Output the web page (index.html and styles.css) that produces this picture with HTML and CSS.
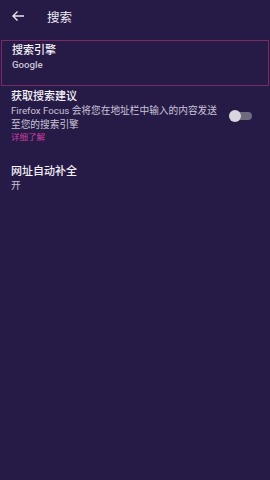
FILE: index.html
```html
<!DOCTYPE html>
<html lang="zh">
<head>
  <meta charset="UTF-8">
  <meta name="viewport" content="width=device-width, initial-scale=1.0">
  <link rel="stylesheet" href="styles.css">
</head>
<body>
  <div class="toolbar">
    <svg class="back" width="14" height="12" viewBox="0 0 14 12">
      <path d="M13 6H2M6.5 1.5L2 6l4.5 4.5" fill="none" stroke="#e8e6ef" stroke-width="1.4"/>
    </svg>
    <span class="title">搜索</span>
  </div>

  <div class="pref focused">
    <div class="pref-title">搜索引擎</div>
    <div class="pref-summary">Google</div>
  </div>

  <div class="pref with-switch">
    <div class="pref-text">
      <div class="pref-title">获取搜索建议</div>
      <div class="pref-summary">Firefox Focus 会将您在地址栏中输入的内容发送至您的搜索引擎</div>
      <div class="learn-more">详细了解</div>
    </div>
    <div class="switch"><span class="thumb"></span></div>
  </div>

  <div class="pref">
    <div class="pref-title">网址自动补全</div>
    <div class="pref-summary">开</div>
  </div>
</body>
</html>
```

FILE: styles.css
```css
body {
  margin: 0;
  height: 480px;
  background-color: #261a47;
  font-family: 'Roboto', 'Noto Sans CJK SC', sans-serif;
  color: #f2f0f7;
}

.toolbar {
  height: 40px;
  display: flex;
  align-items: center;
  padding: 0 0 8px 11px;
  box-sizing: border-box;
}

.back {
  margin-right: 22px;
}

.title {
  font-size: 12.5px;
  color: #eceaf2;
}

.pref {
  padding: 3px 11px 0;
  box-sizing: border-box;
}

.focused {
  height: 46px;
  margin: 0 1px;
  padding: 3px 10px 0;
  border: 1px solid #7c2a66;
}

.pref-title {
  font-size: 11px;
  line-height: 14px;
  font-weight: 500;
  color: #f4f2f8;
}

.focused .pref-summary {
  line-height: 13px;
  font-weight: 500;
}

.pref-summary {
  font-size: 9.7px;
  line-height: 14px;
  color: #c9c4d6;
}

.with-switch {
  display: flex;
  align-items: flex-start;
  padding-top: 4px;
  padding-right: 18px;
  height: 76px;
}

.pref-text {
  width: 214px;
}

.learn-more {
  font-size: 8.5px;
  line-height: 10px;
  color: #d33ea3;
}

.switch {
  position: relative;
  margin: 22px 0 0 auto;
  width: 20px;
  height: 8px;
  border-radius: 4px;
  background-color: #6f6a7d;
}

.thumb {
  position: absolute;
  left: -3px;
  top: -2px;
  width: 12px;
  height: 12px;
  border-radius: 50%;
  background-color: #d9d7de;
}
```
